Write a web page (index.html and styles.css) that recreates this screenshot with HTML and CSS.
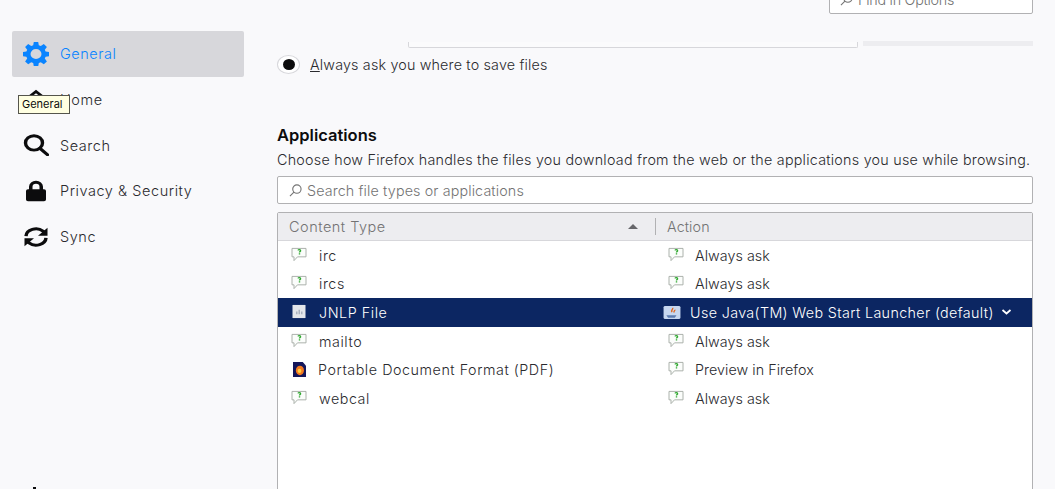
FILE: index.html
```html
<!DOCTYPE html>
<html lang="en">
<head>
<meta charset="utf-8">
<title>Options</title>
<link rel="stylesheet" href="styles.css">
</head>
<body>
<svg class="defs" width="0" height="0" aria-hidden="true">
  <symbol id="chat" viewBox="0 0 16 16" preserveAspectRatio="none">
    <path d="M1 1.500h14v9H6.500L3 14.500v-4H1z" fill="#fbfdfb" stroke="#a9b0a9"/>
    <path d="M7 3.600c.4-1 2.600-1 2.600.3 0 .9-1.100 1-1.100 1.900M8.500 6.600v1.400" fill="none" stroke="#2fa82f" stroke-width="1.400"/>
  </symbol>
</svg>
<div class="page">
  <aside class="sidebar">
    <nav class="nav">
      <a class="nav-item active">
        <svg class="nav-icon" viewBox="0 0 26 26" preserveAspectRatio="none"><path fill="#0a84ff" fill-rule="evenodd" d="M10.800 0h4.400l.6 3.600 2 .8 3-2.100 3.100 3.100-2.100 3 .8 2 3.600.6v4.400l-3.600.6-.8 2 2.100 3-3.100 3.100-3-2.100-2 .8-.6 3.600h-4.400l-.6-3.600-2-.8-3 2.100-3.100-3.100 2.100-3-.8-2-3.600-.6V11l3.600-.6.8-2-2.100-3 3.100-3.100 3 2.100 2-.8zM13 7.500a5.500 5.500 0 1 0 0 11 5.500 5.500 0 0 0 0-11z"/></svg>
        <span>General</span>
      </a>
      <a class="nav-item">
        <svg class="nav-icon" viewBox="0 0 26 26" preserveAspectRatio="none"><path fill="#0c0c0d" d="M13 1 0 13l2 2L13 5l11 10 2-2zM4 16v9h6v-6h6v6h6v-9L13 8z"/></svg>
        <span>Home</span>
      </a>
      <a class="nav-item">
        <svg class="nav-icon" viewBox="0 0 26 26" preserveAspectRatio="none"><circle cx="11" cy="10.500" r="8.500" fill="none" stroke="#0c0c0d" stroke-width="3.400"/><path d="m17 17 7.500 7.500" stroke="#0c0c0d" stroke-width="3.400" stroke-linecap="round"/></svg>
        <span>Search</span>
      </a>
      <a class="nav-item">
        <svg class="nav-icon" viewBox="0 0 26 26" preserveAspectRatio="none"><path fill="#0c0c0d" fill-rule="evenodd" d="M13 1a7 7 0 0 0-7 7v3H5a2 2 0 0 0-2 2v10a2 2 0 0 0 2 2h16a2 2 0 0 0 2-2V13a2 2 0 0 0-2-2h-1V8a7 7 0 0 0-7-7zm-3.500 10V8a3.500 3.500 0 0 1 7 0v3z"/></svg>
        <span>Privacy &amp; Security</span>
      </a>
      <a class="nav-item">
        <svg class="nav-icon" viewBox="0 0 26 26" preserveAspectRatio="none"><path fill="none" stroke="#0c0c0d" stroke-width="3.400" d="M3 12a10 9 0 0 1 17-6l2.500 3M23 14a10 9 0 0 1-17 6l-2.500-3"/><path fill="#0c0c0d" d="M24.500 2v9.500H15zM1.500 24v-9.500H11z"/></svg>
        <span>Sync</span>
      </a>
    </nav>
    <a class="nav-item footer-item">
      <svg class="nav-icon" viewBox="0 0 26 26" preserveAspectRatio="none"><path fill="#0c0c0d" d="M10 0h3v5h10v18H3V5h7z"/></svg>
      <span class="footer-label">Extensions &amp; Themes</span>
    </a>
    <div class="tooltip">General</div>
  </aside>
  <main class="content">
    <div class="find-row">
      <div class="find-box">
        <svg class="search-icon" viewBox="0 0 14 14"><circle cx="8.500" cy="5.500" r="4.500" fill="none" stroke="#737373" stroke-width="1.200"/><path d="M5.300 8.800 1 13" stroke="#737373" stroke-width="1.200"/></svg>
        <span>Find in Options</span>
      </div>
    </div>
    <div class="stub-row">
      <div class="stub-menu"></div>
      <div class="stub-button"></div>
    </div>
    <label class="radio-row">
      <span class="radio"><span class="radio-dot"></span></span>
      <span><u>A</u>lways ask you where to save files</span>
    </label>
    <h2 class="section-title">Applications</h2>
    <p class="section-desc">Choose how Firefox handles the files you download from the web or the applications you use while browsing.</p>
    <div class="search-box">
      <svg class="search-icon" viewBox="0 0 14 14"><circle cx="8.500" cy="5.500" r="4.500" fill="none" stroke="#737373" stroke-width="1.200"/><path d="M5.300 8.800 1 13" stroke="#737373" stroke-width="1.200"/></svg>
      <span>Search file types or applications</span>
    </div>
    <div class="table">
      <div class="table-head">
        <div class="col-type">
          <span>Content Type</span>
          <svg class="sort" viewBox="0 0 10 5"><path fill="#66666a" d="M5 0l5 5H0z"/></svg>
        </div>
        <div class="col-action">Action</div>
      </div>
      <div class="row">
        <div class="cell-type"><svg class="file-icon"><use href="#chat"/></svg><span>irc</span></div>
        <div class="cell-action"><svg class="file-icon"><use href="#chat"/></svg><span>Always ask</span></div>
      </div>
      <div class="row">
        <div class="cell-type"><svg class="file-icon"><use href="#chat"/></svg><span>ircs</span></div>
        <div class="cell-action"><svg class="file-icon"><use href="#chat"/></svg><span>Always ask</span></div>
      </div>
      <div class="row selected">
        <div class="cell-type">
          <svg class="file-icon" viewBox="0 0 16 16" preserveAspectRatio="none"><path fill="#e4e6ea" d="M1.500 1h13v14h-13z"/><path fill="#aab2bf" d="M5 11V8h1.500v3zm2.500 0V6H9v5zm2.500 0V8h1.500v3z"/></svg>
          <span>JNLP File</span>
        </div>
        <div class="cell-action select-cell">
          <svg class="java-icon" viewBox="0 0 16 16" preserveAspectRatio="none"><rect x=".5" y="1" width="15" height="14" rx="1.500" fill="#c6d7f0"/><path d="M3 11h9l-1.500 2.500h-6z" fill="#5a7bb0"/><path d="M8.500 3c1 1.500-2 2.500-.500 4.500M10.500 5c.5 1-1.500 1.500-.5 3" fill="none" stroke="#e2671d" stroke-width="1.300"/></svg>
          <span>Use Java(TM) Web Start Launcher (default)</span>
          <svg class="chevron" viewBox="0 0 10 6"><path d="m1 1 4 3.500L9 1" fill="none" stroke="#fff" stroke-width="1.800"/></svg>
        </div>
      </div>
      <div class="row">
        <div class="cell-type"><svg class="file-icon"><use href="#chat"/></svg><span>mailto</span></div>
        <div class="cell-action"><svg class="file-icon"><use href="#chat"/></svg><span>Always ask</span></div>
      </div>
      <div class="row">
        <div class="cell-type">
          <svg class="pdf-icon" viewBox="0 0 16 16" preserveAspectRatio="none"><path fill="#14165a" d="M0 0h12l4 4v12H0z"/><circle cx="8.500" cy="9" r="5" fill="#f47a1f"/><circle cx="8" cy="9.500" r="2.300" fill="#ffcf3f"/></svg>
          <span>Portable Document Format (PDF)</span>
        </div>
        <div class="cell-action"><svg class="file-icon"><use href="#chat"/></svg><span>Preview in Firefox</span></div>
      </div>
      <div class="row">
        <div class="cell-type"><svg class="file-icon"><use href="#chat"/></svg><span>webcal</span></div>
        <div class="cell-action"><svg class="file-icon"><use href="#chat"/></svg><span>Always ask</span></div>
      </div>
    </div>
  </main>
</div>
</body>
</html>
```

FILE: styles.css
```css
* { box-sizing: border-box; }
html, body { margin: 0; height: 100%; overflow: hidden; }
body {
  background: #f9f9fb;
  color: #0c0c0d;
  font-family: Inter, "DejaVu Sans", sans-serif;
  font-size: 14.300px;
  font-weight: 300;
}
.defs { position: absolute; }
.page { display: flex; height: 489px; overflow: hidden; }

.sidebar {
  position: relative;
  flex: 0 0 277px;
  display: flex;
  flex-direction: column;
  padding: 31px 33px 0 12px;
}
.nav { display: flex; flex-direction: column; flex: 1; }
.nav-item {
  display: flex;
  align-items: center;
  gap: 11px;
  height: 45.700px;
  padding-left: 11px;
  border-radius: 2px;
  font-size: 14.500px;
  letter-spacing: .55px;
  color: #2a2a2e;
}
.nav-icon { width: 26px; height: 22px; flex: none; }
.nav-item.active { background: #d7d7db; color: #0a84ff; }
.nav-item.active .nav-icon { height: 24px; }
.footer-item { margin-bottom: -28px; flex: none; height: 30px; align-items: flex-start; }
.footer-label { margin-top: -1px; }
.tooltip {
  position: absolute;
  left: 18px;
  top: 95px;
  width: 52px;
  height: 19px;
  padding-left: 3px;
  background: #ffffe1;
  border: 1px solid #55554c;
  font-size: 11px;
  font-weight: 400;
  line-height: 17px;
  white-space: nowrap;
}

.content { flex: 1; padding-right: 22px; display: flex; flex-direction: column; }
.content > * { flex: none; }
.find-row { display: flex; justify-content: flex-end; margin-top: -16px; }
.find-box {
  width: 204px;
  height: 30px;
  display: flex;
  align-items: center;
  gap: 5px;
  padding-left: 10px;
  background: #fff;
  border: 1px solid #b1b1b3;
  border-radius: 2px;
  letter-spacing: -.25px;
  color: #737373;
}
.search-icon { width: 13px; height: 13px; flex: none; }
.stub-row { display: flex; margin-top: 28px; gap: 5px; height: 6px; padding-left: 131px; }
.stub-menu {
  flex: 0 0 450px;
  height: 6px;
  background: #fbfbfc;
  border: 1px solid #d7d7db;
  border-top: 0;
  border-radius: 0 0 2px 2px;
}
.stub-button { flex: 1; height: 5px; margin-top: -1px; background: #ededf0; }
.radio-row { display: flex; align-items: center; gap: 10px; margin-top: 7px; height: 19px; letter-spacing: .18px; color: #2a2a2e; }
.radio {
  width: 23px;
  height: 19px;
  display: flex;
  align-items: center;
  justify-content: center;
  background: #fff;
  border: 1px solid #d7d7db;
  border-radius: 50%;
}
.radio-dot { width: 12px; height: 11px; background: #0c0c0d; border-radius: 50%; }
.section-title { margin: 50px 0 0; font-size: 16.500px; line-height: 22px; font-weight: 600; color: #0c0c0d; }
.section-desc { margin: 6px 0 0; height: 24px; line-height: 16px; letter-spacing: .25px; white-space: nowrap; color: #2a2a2e; }
.search-box {
  height: 28px;
  display: flex;
  align-items: center;
  gap: 5px;
  padding-left: 11px;
  background: #fff;
  border: 1px solid #b1b1b3;
  border-radius: 2px;
  letter-spacing: .13px;
  color: #737373;
}
.table {
  margin-top: 8px;
  height: 300px;
  background: #fff;
  border: 1px solid #b1b1b3;
  border-radius: 2px;
}
.table-head {
  display: flex;
  align-items: center;
  height: 28px;
  background: #ededf0;
  border-bottom: 1px solid #d7d7db;
  color: #737373;
}
.col-type {
  flex: 0 0 378px;
  display: flex;
  align-items: center;
  justify-content: space-between;
  padding: 0 17px 0 11px;
  border-right: 1px solid #b1b1b3;
  font-size: 14.500px;
  letter-spacing: .5px;
}
.sort { width: 10px; height: 5px; }
.col-action { padding-left: 11px; letter-spacing: .1px; }
.row { display: flex; align-items: center; height: 28.600px; color: #2a2a2e; }
.cell-type { flex: 0 0 390px; display: flex; align-items: center; gap: 12px; padding-left: 13px; letter-spacing: .55px; }
.cell-action { flex: 1; display: flex; align-items: center; gap: 11px; letter-spacing: .05px; }
.file-icon { width: 16px; height: 15px; flex: none; margin-top: -2px; }
.pdf-icon { width: 13px; height: 15px; flex: none; margin-left: 2px; }
.row.selected { background: #0c2662; color: #fff; }
.select-cell { margin-left: -5px; gap: 9px; letter-spacing: .37px; }
.java-icon { width: 18px; height: 15px; flex: none; }
.chevron { width: 11px; height: 6px; margin-left: -2px; }
```
